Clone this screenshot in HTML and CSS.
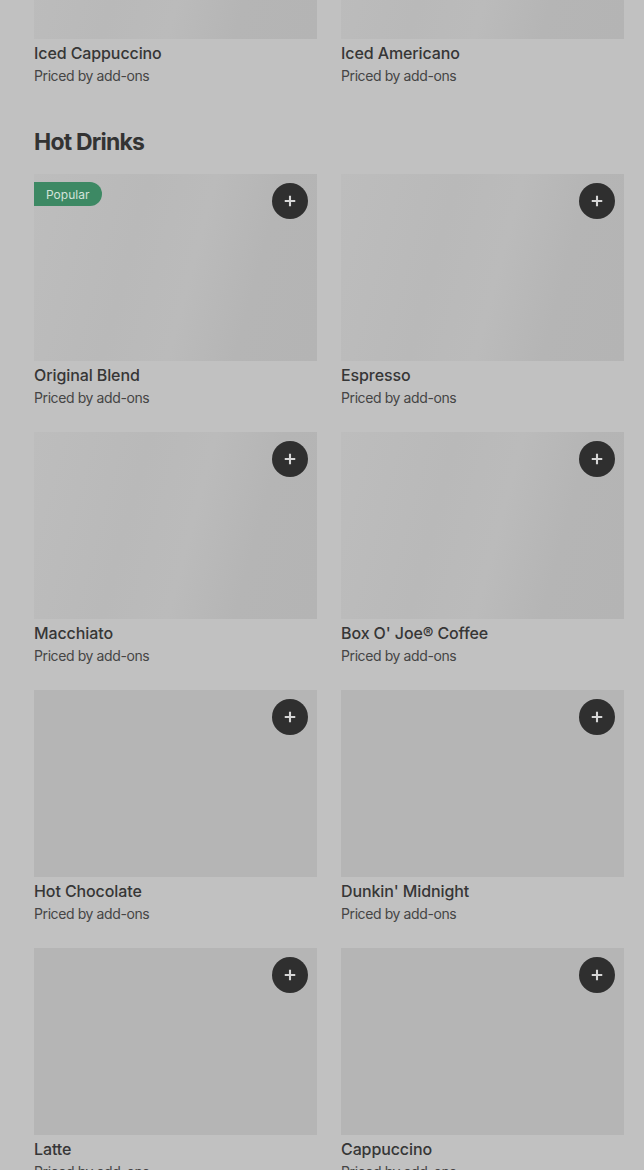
FILE: index.html
```html
<!DOCTYPE html>
<html lang="en">
<head>
<meta charset="utf-8">
<title>Menu</title>
<link rel="stylesheet" href="styles.css">
</head>
<body>
<main class="page">
  <section class="grid first">
    <article class="card">
      <div class="thumb shimmer"></div>
      <div class="info"><h3 class="name">Iced Cappuccino</h3><p class="price">Priced by add-ons</p></div>
    </article>
    <article class="card">
      <div class="thumb shimmer"></div>
      <div class="info"><h3 class="name">Iced Americano</h3><p class="price">Priced by add-ons</p></div>
    </article>
  </section>

  <h2 class="section-title">Hot Drinks</h2>

  <section class="grid">
    <article class="card">
      <div class="thumb shimmer">
        <span class="badge">Popular</span>
        <button class="add" aria-label="Add"><svg viewBox="0 0 16 16" width="14" height="14"><path d="M8 2v12M2 8h12" stroke="currentColor" stroke-width="2.4" fill="none"/></svg></button>
      </div>
      <div class="info"><h3 class="name">Original Blend</h3><p class="price">Priced by add-ons</p></div>
    </article>
    <article class="card">
      <div class="thumb shimmer">
        <button class="add" aria-label="Add"><svg viewBox="0 0 16 16" width="14" height="14"><path d="M8 2v12M2 8h12" stroke="currentColor" stroke-width="2.4" fill="none"/></svg></button>
      </div>
      <div class="info"><h3 class="name">Espresso</h3><p class="price">Priced by add-ons</p></div>
    </article>
    <article class="card">
      <div class="thumb shimmer">
        <button class="add" aria-label="Add"><svg viewBox="0 0 16 16" width="14" height="14"><path d="M8 2v12M2 8h12" stroke="currentColor" stroke-width="2.4" fill="none"/></svg></button>
      </div>
      <div class="info"><h3 class="name">Macchiato</h3><p class="price">Priced by add-ons</p></div>
    </article>
    <article class="card">
      <div class="thumb shimmer">
        <button class="add" aria-label="Add"><svg viewBox="0 0 16 16" width="14" height="14"><path d="M8 2v12M2 8h12" stroke="currentColor" stroke-width="2.4" fill="none"/></svg></button>
      </div>
      <div class="info"><h3 class="name">Box O' Joe® Coffee</h3><p class="price">Priced by add-ons</p></div>
    </article>
    <article class="card">
      <div class="thumb">
        <button class="add" aria-label="Add"><svg viewBox="0 0 16 16" width="14" height="14"><path d="M8 2v12M2 8h12" stroke="currentColor" stroke-width="2.4" fill="none"/></svg></button>
      </div>
      <div class="info"><h3 class="name">Hot Chocolate</h3><p class="price">Priced by add-ons</p></div>
    </article>
    <article class="card">
      <div class="thumb">
        <button class="add" aria-label="Add"><svg viewBox="0 0 16 16" width="14" height="14"><path d="M8 2v12M2 8h12" stroke="currentColor" stroke-width="2.4" fill="none"/></svg></button>
      </div>
      <div class="info"><h3 class="name">Dunkin' Midnight</h3><p class="price">Priced by add-ons</p></div>
    </article>
    <article class="card">
      <div class="thumb">
        <button class="add" aria-label="Add"><svg viewBox="0 0 16 16" width="14" height="14"><path d="M8 2v12M2 8h12" stroke="currentColor" stroke-width="2.4" fill="none"/></svg></button>
      </div>
      <div class="info"><h3 class="name">Latte</h3><p class="price">Priced by add-ons</p></div>
    </article>
    <article class="card">
      <div class="thumb">
        <button class="add" aria-label="Add"><svg viewBox="0 0 16 16" width="14" height="14"><path d="M8 2v12M2 8h12" stroke="currentColor" stroke-width="2.4" fill="none"/></svg></button>
      </div>
      <div class="info"><h3 class="name">Cappuccino</h3><p class="price">Priced by add-ons</p></div>
    </article>
  </section>
</main>
</body>
</html>
```

FILE: styles.css
```css
html, body {
  margin: 0;
  padding: 0;
  background: #c1c1c1;
  height: 100%;
  overflow: hidden;
}

body {
  font-family: Inter, "Noto Sans", Arial, sans-serif;
  color: #333333;
}

.page {
  padding: 0 20px 0 34px;
  margin-top: -148px;
}

.grid {
  display: grid;
  grid-template-columns: 283px 283px;
  column-gap: 24px;
  row-gap: 25px;
}

.card {
  display: flex;
  flex-direction: column;
}

.thumb {
  position: relative;
  height: 187px;
  background: #b5b5b5;
}

.thumb.shimmer {
  background: linear-gradient(105deg, #bdbdbd 0%, #b9b9b9 35%, #bbbbbb 55%, #b5b5b5 75%, #b4b4b4 100%);
}

.info {
  padding-top: 4px;
  display: flex;
  flex-direction: column;
  gap: 4px;
}

.name {
  margin: 0;
  font-size: 16px;
  line-height: 20px;
  font-weight: 500;
  color: #363636;
  letter-spacing: -0.1px;
}

.price {
  margin: 0;
  font-size: 14px;
  line-height: 18px;
  font-weight: 400;
  color: #454545;
  letter-spacing: -0.4px;
}

.section-title {
  margin: 41px 0 16px;
  font-size: 23px;
  line-height: 32px;
  font-weight: 700;
  letter-spacing: -0.8px;
  color: #333333;
}

.badge {
  position: absolute;
  top: 8px;
  left: 0;
  height: 24px;
  width: 68px;
  box-sizing: border-box;
  padding-left: 12px;
  display: flex;
  align-items: center;
  background: #3d8964;
  color: #d3e3da;
  font-size: 12px;
  border-radius: 0 12px 12px 0;
}

.add {
  position: absolute;
  top: 9px;
  right: 9px;
  width: 36px;
  height: 36px;
  border: none;
  padding: 0;
  border-radius: 50%;
  background: #2f2f2f;
  color: #d6d6d6;
  display: flex;
  align-items: center;
  justify-content: center;
}
```
